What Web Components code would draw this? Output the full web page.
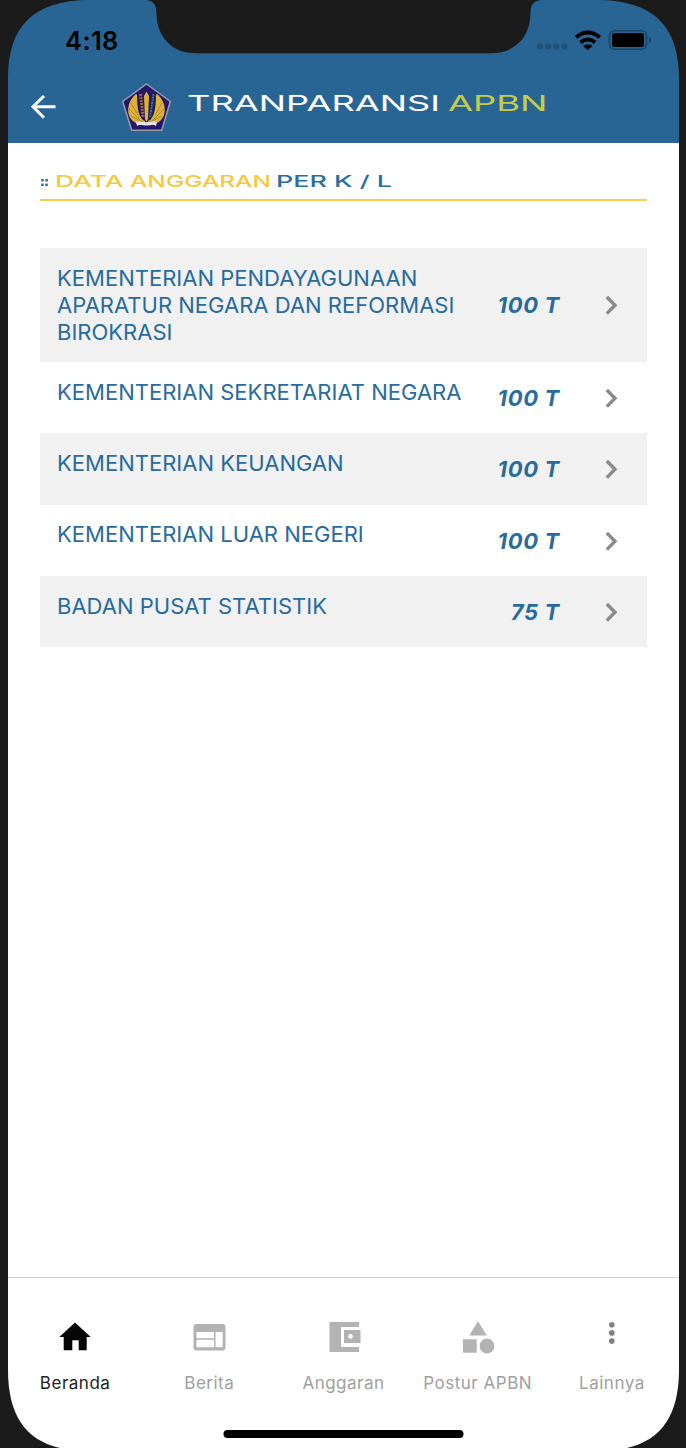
<!DOCTYPE html>
<html lang="id">
<head>
<meta charset="utf-8">
<title>Tranparansi APBN</title>
<style>
html,body{margin:0;height:1448px;overflow:hidden;background:#1b1b1b;font-family:Inter,"Liberation Sans",sans-serif}
</style>
</head>
<body>
<phone-shell>
  <status-bar slot="header"></status-bar>
  <app-header slot="header"></app-header>
  <section-title></section-title>
  <budget-list>
    <budget-row amount="100 T">KEMENTERIAN PENDAYAGUNAAN<br>APARATUR NEGARA DAN REFORMASI<br>BIROKRASI</budget-row>
    <budget-row amount="100 T">KEMENTERIAN SEKRETARIAT NEGARA</budget-row>
    <budget-row amount="100 T">KEMENTERIAN KEUANGAN</budget-row>
    <budget-row amount="100 T">KEMENTERIAN LUAR NEGERI</budget-row>
    <budget-row amount="75 T">BADAN PUSAT STATISTIK</budget-row>
  </budget-list>
  <tab-bar slot="footer">
    <tab-item active label="Beranda"><svg width="40" height="40" viewBox="0 0 40 40"><path fill="#050505" d="M20 5.500L35.700 20H31.700V33.200H23.700V23.200H17.300V33.200H8.700V20H4.300z"/></svg></tab-item>
    <tab-item label="Berita"><svg width="40" height="40" viewBox="0 0 40 40"><path fill="#b3b3b3" fill-rule="evenodd" d="M7.500 7h26a3 3 0 0 1 3 3v20.500a3 3 0 0 1-3 3h-26a3 3 0 0 1-3-3V10a3 3 0 0 1 3-3zM7.500 15v6.200h17.500V15zM7.500 22.700v7.500h17.500v-7.500zM26.500 15v15.200h7.200V15z"/></svg></tab-item>
    <tab-item label="Anggaran"><svg width="40" height="40" viewBox="0 0 40 40"><path fill="#b3b3b3" d="M5.500 5h29.500v5H17v20H35v5H5.500zM20 13h16.500v13H20zm6.500 4a2.400 2.400 0 1 0 .01 0z" fill-rule="evenodd"/></svg></tab-item>
    <tab-item label="Postur APBN"><svg width="40" height="40" viewBox="0 0 40 40"><path fill="#b3b3b3" d="M20 4l8.700 14.500H11.300zM5 22.300h13.700v13.500H5z"/><circle cx="29" cy="29" r="7.400" fill="#b3b3b3"/></svg></tab-item>
    <tab-item label="Lainnya"><svg width="40" height="40" viewBox="0 0 40 40" fill="#808080"><circle cx="19.800" cy="7.700" r="2.800"/><circle cx="19.800" cy="15.900" r="2.800"/><circle cx="19.800" cy="24.100" r="2.800"/></svg></tab-item>
  </tab-bar>
</phone-shell>
<script>
function define(name, html, setup) {
  customElements.define(name, class extends HTMLElement {
    constructor() {
      super();
      this.attachShadow({mode: 'open'}).innerHTML = html;
    }
    connectedCallback() { if (setup) setup(this, this.shadowRoot); }
  });
}

define('phone-shell', `<style>
:host{display:block;position:relative;width:686px;height:1448px}
.screen{display:flex;flex-direction:column;margin:0 7px 0 8px;height:1448px;background:#fff}
main{flex:1;padding:0 32px}
.bezel{position:absolute;inset:0}
</style>
<div class="screen"><slot name="header"></slot><main><slot></slot></main><slot name="footer"></slot></div>
<svg class="bezel" width="686" height="1448" viewBox="0 0 686 1448" fill="#1b1b1b">
<path d="M0 0H90C32 0 8 28 8 78H0z"/><path d="M686 0H597C655 0 679 28 679 78H686z"/>
<path d="M146 0C154 1 156.500 5 156.500 14C157 37 172 53.300 196 53.300H491C515 53.300 530 37 530.500 14C530.500 5 533 1 541 0z"/>
<path d="M8 1370C8 1414 25 1440 60 1448H0V1370z"/><path d="M679 1370C679 1414 662 1440 627 1448H686V1370z"/>
<rect x="223.500" y="1430" width="240" height="8" rx="4" fill="#000"/></svg>`);

define('status-bar', `<style>
:host{display:flex;justify-content:space-between;align-items:center;height:80px;background:#286595;box-sizing:border-box;padding:0 28px 0 57px}
span{font-weight:600;font-size:25.500px;letter-spacing:.4px;color:#000}
</style><span>4:18</span>
<svg width="115" height="24" viewBox="536 28 115 24">
<g fill="#1f5179"><rect x="537" y="43.500" width="6" height="6" rx="2"/><rect x="545.200" y="43.500" width="6" height="6" rx="2"/><rect x="553.300" y="43.500" width="6" height="6" rx="2"/><rect x="561.400" y="43.500" width="6" height="6" rx="2"/></g>
<g fill="none" stroke="#000" stroke-width="3.900"><path d="M576 37.200Q587.800 27.700 599.800 37.200"/><path d="M580.500 42.400Q587.800 36.700 595.200 42.400"/></g><path d="M583 46Q587.800 42.500 592.700 46L587.800 50z"/>
<rect x="609.500" y="30.800" width="37" height="18.400" rx="5" fill="none" stroke="#1b4668" stroke-width="1.600"/><rect x="612" y="33" width="32" height="14" rx="2.500"/><path d="M648.800 37q2.200 1 2.200 3t-2.200 3z" fill="#1b4668"/></svg>`);

define('app-header', `<style>
:host{display:flex;height:62.500px;background:#286595}
svg{display:block;flex:none}
text{font-weight:400;font-size:22px}
</style>
<svg width="671" height="62.500" viewBox="8 80 671 62.500">
<path d="M55.500 106.800H33M44 96L33 106.800L44 117.800" fill="none" stroke="#fff" stroke-width="3"/>
<path d="M146.500 84L170.300 101.500L161.800 130.300H131.700L122.700 101.500z" fill="#24176c" stroke="#9c9ba8" stroke-width="1.500"/>
<g fill="#dfb236"><path d="M136 94C125 103 125 121 140 124.500L145 125V121C139 119 137 109 137 95z"/><path d="M157 94C168 103 168 121 153 124.500L148 125V121C154 119 156 109 156 95z"/><path d="M146.500 91.500L149 96L148 119L146.500 122L145 119L144 96z"/></g>
<g fill="none" stroke="#8a6c2c" stroke-width=".6"><path d="M131 103L138 115M129 109L140 120M131 116L143 122M162 103L155 115M164 109L153 120M162 116L150 122"/></g>
<path d="M140.500 94L143 117" stroke="#9a6836" stroke-width="3" stroke-dasharray="2 1"/><path d="M153.500 94L150 117" stroke="#348071" stroke-width="2" stroke-dasharray="2 .7"/>
<path d="M136 122L139 121.500Q146.500 123 154 121.500L157 122L156 126L153.500 124.800Q146.500 126 139.500 124.800L137 126z" fill="#e8e5ec"/>
<text x="187" y="111" fill="#fff" textLength="253" lengthAdjust="spacingAndGlyphs">TRANPARANSI</text>
<text x="448" y="111" fill="#c4cc49" textLength="99.500" lengthAdjust="spacingAndGlyphs">APBN</text>
</svg>`);

define('section-title', `<style>
:host{display:block;height:58.500px;border-bottom:2px solid #f5cb4e;box-sizing:border-box;margin-bottom:47px}
svg{display:block}text{font-size:16.500px;font-weight:500}
</style>
<svg width="606" height="56" viewBox="40 143 606 56">
<g fill="#286e9f"><rect x="41.200" y="179" width="2.500" height="2.500"/><rect x="45.300" y="179" width="2.500" height="2.500"/><rect x="41.200" y="183.600" width="2.500" height="2.500"/><rect x="45.300" y="183.600" width="2.500" height="2.500"/></g>
<text x="55" y="186.700" fill="#f5c842" textLength="68.500" lengthAdjust="spacingAndGlyphs">DATA</text>
<text x="130" y="186.700" fill="#f5c842" textLength="141" lengthAdjust="spacingAndGlyphs">ANGGARAN</text>
<text x="276" y="186.700" fill="#286e9f" textLength="116" lengthAdjust="spacingAndGlyphs">PER K / L</text>
</svg>`);

define('budget-list', `<style>
:host{display:block}
::slotted(:nth-child(odd)){background:#f1f1f1}
</style><slot></slot>`);

define('budget-row', `<style>
:host{display:flex;align-items:center;justify-content:space-between;box-sizing:border-box;min-height:71.300px;padding:16.700px 29px 16px 17px;color:#286b9d}
.name{align-self:flex-start;flex:1;font-size:22px;line-height:27.100px;letter-spacing:.01px;white-space:nowrap}
b{font-size:22px;font-style:italic;font-weight:700;letter-spacing:.7px;margin-right:45px}
svg{display:block}
</style><div class="name"><slot></slot></div><b></b>
<svg width="13" height="20" viewBox="0 0 13 20"><path d="M1.800 2L10 10.300L1.800 18.600" fill="none" stroke="#8a8a8a" stroke-width="3.400"/></svg>`,
(el, root) => { root.querySelector('b').textContent = el.getAttribute('amount'); });

define('tab-bar', `<style>
:host{display:flex;height:171px;border-top:1px solid #cfcfcf;box-sizing:border-box;background:#fff}
::slotted(*){flex:1 1 0}
</style><slot></slot>`);

define('tab-item', `<style>
:host{display:flex;flex-direction:column;align-items:center;padding-top:39px;color:#a0a0a0;min-width:0}
:host([active]){color:#222}
span{font-size:17px;line-height:24px;margin-top:14px;letter-spacing:.5px;white-space:nowrap}
</style><slot></slot><span></span>`,
(el, root) => { root.querySelector('span').textContent = el.getAttribute('label'); });
</script>
</body>
</html>
